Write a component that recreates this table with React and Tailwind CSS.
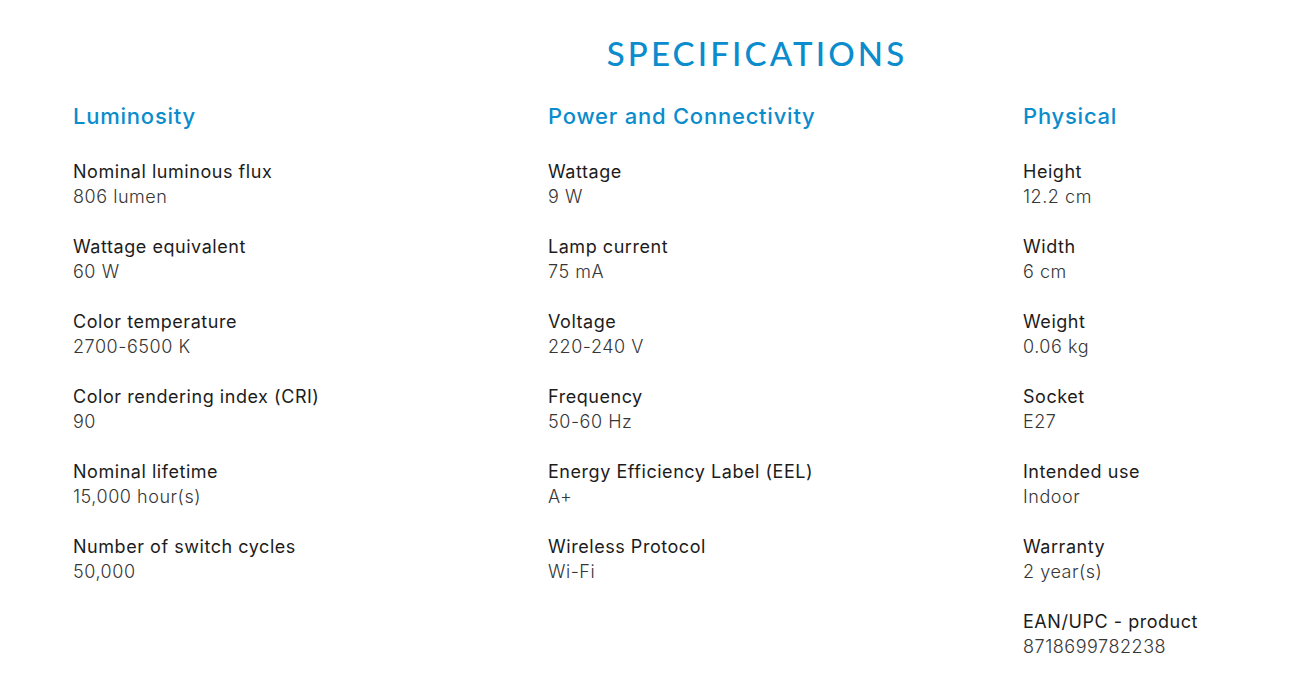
import React from "react";

const cols = [
  {
    title: "Luminosity",
    items: [
      ["Nominal luminous flux", "806 lumen"],
      ["Wattage equivalent", "60 W"],
      ["Color temperature", "2700-6500 K"],
      ["Color rendering index (CRI)", "90"],
      ["Nominal lifetime", "15,000 hour(s)"],
      ["Number of switch cycles", "50,000"],
    ],
  },
  {
    title: "Power and Connectivity",
    items: [
      ["Wattage", "9 W"],
      ["Lamp current", "75 mA"],
      ["Voltage", "220-240 V"],
      ["Frequency", "50-60 Hz"],
      ["Energy Efficiency Label (EEL)", "A+"],
      ["Wireless Protocol", "Wi-Fi"],
    ],
  },
  {
    title: "Physical",
    items: [
      ["Height", "12.2 cm"],
      ["Width", "6 cm"],
      ["Weight", "0.06 kg"],
      ["Socket", "E27"],
      ["Intended use", "Indoor"],
      ["Warranty", "2 year(s)"],
      ["EAN/UPC - product", "8718699782238"],
    ],
  },
];

export default function App() {
  return (
    <div className="w-[1311px] h-[676px] bg-white overflow-hidden" style={{ fontFamily: "Inter, 'Noto Sans', sans-serif" }}>
      <div className="pl-[203px] pt-[33px]">
        <h1 className="text-center text-[33px] leading-[40px] font-medium tracking-[0.095em] text-[#0a8ccd]" style={{ fontFamily: "Lato, 'Open Sans', sans-serif" }}>
          SPECIFICATIONS
        </h1>
      </div>
      <div className="grid grid-cols-[475px_475px_1fr] pl-[73px] mt-[29px]">
        {cols.map((c) => (
          <div key={c.title}>
            <h2 className="text-[22px] leading-[28px] font-medium tracking-[0.035em] text-[#0a8ccd]">{c.title}</h2>
            <div className="mt-[29px] flex flex-col gap-[25px]">
              {c.items.map(([l, v]) => (
                <div key={l} className="text-[18px] leading-[25px] tracking-[0.03em]">
                  <div className="text-[#1c1c1c] font-normal">{l}</div>
                  <div className="text-[#363636] font-light">{v}</div>
                </div>
              ))}
            </div>
          </div>
        ))}
      </div>
    </div>
  );
}
